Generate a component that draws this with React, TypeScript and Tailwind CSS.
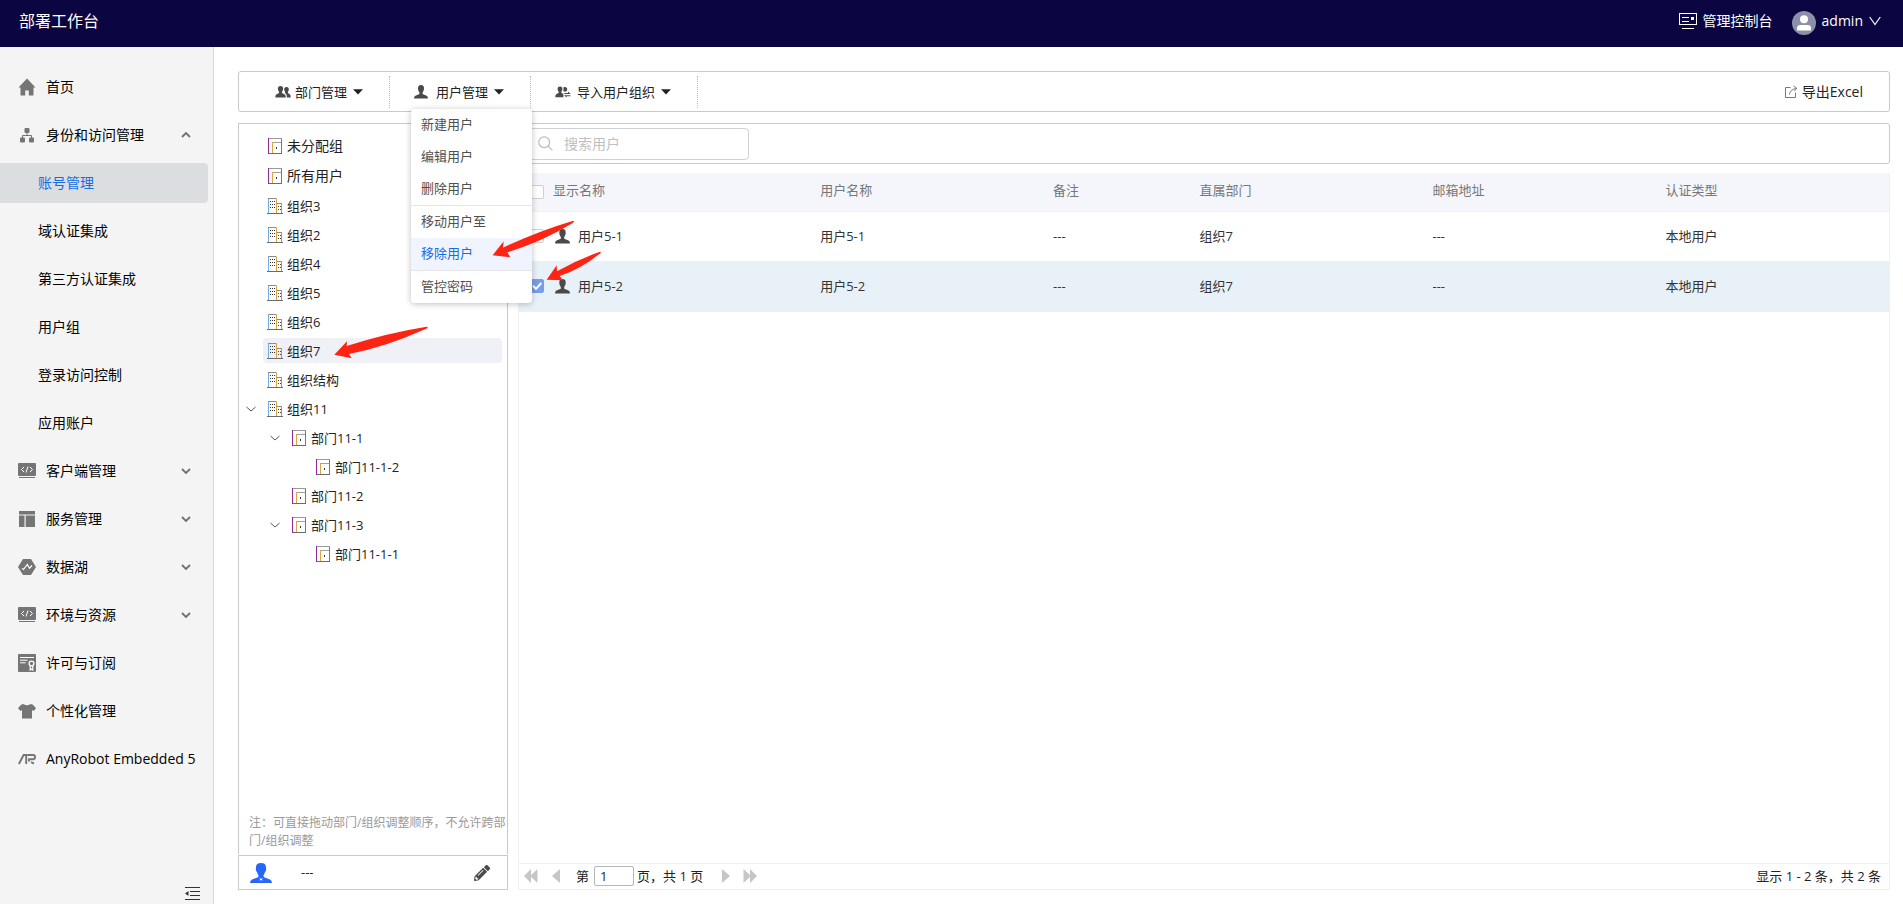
import React, { useState } from "react";
import { FaPencilAlt } from "react-icons/fa";

/* ---------- icons ---------- */

const HomeIcon = () => (
  <svg width="18" height="18" viewBox="0 0 18 18" fill="#757575">
    <path d="M9 0.5 L17.5 9.5 H15.5 V17.5 H10.8 V12.5 H7.2 V17.5 H2.5 V9.5 H0.5 Z" />
  </svg>
);

const TreeIcon = () => (
  <svg width="18" height="18" viewBox="0 0 18 18" fill="#757575">
    <rect x="6.5" y="2" width="5" height="5" rx="1" />
    <rect x="2" y="11.5" width="5" height="5" rx="1" />
    <rect x="11" y="11.5" width="5" height="5" rx="1" />
    <path d="M4.5 12 V9.5 H13.5 V12 M9 6.5 V9.5" fill="none" stroke="#757575" />
  </svg>
);

const CodeIcon = () => (
  <svg width="18" height="18" viewBox="0 0 18 18">
    <rect x="0" y="1" width="18" height="13" rx="1" fill="#757575" />
    <rect x="1" y="15" width="16" height="1" fill="#757575" />
    <path d="M6 5 L3.5 7.5 L6 10 M12 5 L14.5 7.5 L12 10 M10 4.5 L8 10.5" fill="none" stroke="#fff" strokeWidth="1" />
  </svg>
);

const LayoutIcon = () => (
  <svg width="18" height="18" viewBox="0 0 18 18" fill="#757575">
    <rect x="1" y="1" width="16" height="3.5" />
    <rect x="1" y="5.5" width="5.5" height="11.5" />
    <rect x="7.7" y="5.5" width="9.3" height="11.5" />
  </svg>
);

const LakeIcon = () => (
  <svg width="18" height="18" viewBox="0 0 18 18">
    <path d="M5 1 H13 L18 9 L13 17 H5 L0 9 Z" fill="#757575" />
    <path d="M4 10.5 L5.5 11.5 L9.3 6.5 L11.5 10.3 L14 7.5" fill="none" stroke="#fff" strokeWidth="1.2" />
  </svg>
);

const LicenseIcon = () => (
  <svg width="18" height="18" viewBox="0 0 18 18">
    <rect width="18" height="18" rx="1" fill="#757575" />
    <path d="M2 3.5 H16 M2 6.2 H9.5 M2 8.8 H7.5" stroke="#fff" strokeWidth="1" />
    <circle cx="13.5" cy="9.5" r="2.4" fill="none" stroke="#fff" strokeWidth="1.3" />
    <path d="M12.2 11.5 V16 L13.5 15 L14.8 16 V11.5" fill="none" stroke="#fff" strokeWidth="1.2" />
  </svg>
);

const ShirtIcon = () => (
  <svg width="18" height="18" viewBox="0 0 18 18" fill="#757575">
    <path d="M5.5 2 Q9 4.5 12.5 2 L15 2.8 L18 6.3 L15.6 9 L14 8 V16.5 H4 V8 L2.4 9 L0 6.3 L3 2.8 Z" />
  </svg>
);

const RobotIcon = () => (
  <svg width="18" height="18" viewBox="0 0 18 18" fill="none" stroke="#757575" strokeWidth="1.9">
    <path d="M0.9 14 L5.6 5 H8.2 V14" />
    <path d="M9.2 5 H15.2 Q17 5 17 7 Q17 9.2 15.2 9.2 H11 V11.6 M13 12.2 L16 13.6" />
  </svg>
);

const BustIcon = ({ className, color }: { className: string; color: string }) => (
  <svg className={className} viewBox="0 0 14 14" fill={color}>
    <path d="M7 0 C9.2 0 10.2 1.5 10 3.6 C10 5.4 9.3 6.6 8.6 7.4 V9 L12.6 10.8 Q14 11.4 14 13.5 H0 Q0 11.4 1.4 10.8 L5.4 9 V7.4 C4.7 6.6 4 5.4 4 3.6 C3.8 1.5 4.8 0 7 0 Z" />
  </svg>
);

const ProfileIcon = () => (
  <svg width="22" height="20" viewBox="0 0 22 20" fill="#2468f7">
    <path d="M11 0 C14.5 0 16.3 1.8 16 5 C16.6 7 15.6 8.6 14.9 9.3 C14.4 11 13.8 12 13.4 12.6 L14 14.3 L20 16.4 Q22 17.4 22 20 H0 Q0 17.4 2 16.4 L8 14.3 L8.6 12.6 C8.2 12 7.6 11 7.1 9.3 C6.4 8.6 5.4 7 6 5 C5.7 1.8 7.5 0 11 0 Z" />
    <path d="M9.2 14.4 L11 16 L12.8 14.4 L12 16.6 L12.6 18 L11 16.8 L9.4 18 L10 16.6 Z" fill="#fff" />
  </svg>
);

const GroupIcon = () => (
  <svg width="16" height="14" viewBox="0 0 16 14" fill="#4a4a4a">
    <path d="M5.5 1 C7.5 1 8.3 2.4 8.1 4 C8 5.3 7.4 6.2 7 6.7 V8 L9.8 9.4 Q10.8 10 10.8 12.5 H0.3 Q0.3 10 1.2 9.4 L4 8 V6.7 C3.6 6.2 3 5.3 2.9 4 C2.7 2.4 3.5 1 5.5 1 Z" />
    <path d="M11.5 2 C13.2 2 14 3.2 13.8 4.6 C13.7 5.7 13.2 6.4 12.9 6.9 V8 L15 9.4 Q15.7 10 15.7 12.5 H11.9 Q12 9.6 10.8 8.8 L9.8 8.1 L10.2 6.9 C9.6 6.2 9.2 5.4 9.2 4.6 C9.1 3.2 9.8 2 11.5 2 Z" />
  </svg>
);

const ImportIcon = () => (
  <svg width="16" height="14" viewBox="0 0 16 14" fill="#4a4a4a">
    <path d="M5 1.5 C6.8 1.5 7.6 2.7 7.4 4.2 C7.3 5.4 6.8 6.1 6.4 6.6 V7.8 L8.4 9 V12.2 H0.3 Q0.3 9.7 1.2 9.2 L3.7 7.8 V6.6 C3.3 6.1 2.7 5.4 2.6 4.2 C2.5 2.7 3.2 1.5 5 1.5 Z" />
    <path d="M9.8 2 C11.5 2 12.4 3 12.2 4.4 C12.1 5.4 11.7 6 11.3 6.4 H8.5 L8.3 5.6 C8.7 4.6 8.7 3.2 8.1 2.6 Z" />
    <path d="M9.2 8 H13 V6.6 L15.8 8.9 H9.2 Z M15.4 10.2 H9 L11.6 12.6 V11.2 H15.4 Z" />
  </svg>
);

const ExportIcon = () => (
  <svg width="14" height="14" viewBox="0 0 14 14" fill="none" stroke="#777">
    <path d="M6.5 2.5 H1.5 V12.5 H11.5 V7.5" />
    <path d="M5.5 9.5 Q6 4.5 12 3.5 M9.5 1 L12.7 3.2 L10.5 6" />
  </svg>
);

const BuildingIcon = () => (
  <svg width="16" height="16" viewBox="0 0 16 16" fill="none">
    <path d="M1.5 0 V15" stroke="#6eb0e6" />
    <path d="M1 0.5 H9.5 M9.5 5.5 H15" stroke="#8b8b8b" />
    <path d="M9.5 1 V15" stroke="#d9a13a" />
    <path d="M14.5 5.5 V15" stroke="#999" />
    <path d="M0 15.5 H16" stroke="#6b6b6b" />
    <path d="M3 3.5 H8 M3 6.5 H8 M3 9.5 H8" stroke="#333" strokeDasharray="1 1" />
    <path d="M11 8.5 H14 M11 11.5 H14" stroke="#444" strokeDasharray="1 1" />
  </svg>
);

const DoorIcon = () => (
  <svg width="16" height="16" viewBox="0 0 16 16" fill="none">
    <path d="M1 0.5 H15" stroke="#9a9a9a" />
    <path d="M14.5 1 V15" stroke="#777" />
    <path d="M1 15.5 H15" stroke="#6a6a6a" />
    <path d="M1.5 0 V16" stroke="#932a93" />
    <path d="M5.5 4 V15" stroke="#dba648" />
    <path d="M6 4.5 H14" stroke="#a0a0a0" />
    <rect x="9" y="9" width="1" height="2" fill="#333" />
  </svg>
);

const Chevron = ({ up = false }: { up?: boolean }) => (
  <svg width="10" height="8" viewBox="0 0 10 8" fill="none" stroke="#707070" strokeWidth="1.8">
    <path d={up ? "M1 6 L5 2 L9 6" : "M1 2 L5 6 L9 2"} />
  </svg>
);

const Caret = () => (
  <svg width="10" height="6" viewBox="0 0 10 6" fill="#222">
    <path d="M0 0.3 H10 L5 5.6 Z" />
  </svg>
);

/* ---------- data ---------- */

type NavItem = { label: string; icon?: React.ReactNode; arrow?: "up" | "down"; active?: boolean };

const NAV: NavItem[] = [
  { label: "首页", icon: <HomeIcon /> },
  { label: "身份和访问管理", icon: <TreeIcon />, arrow: "up" },
  { label: "账号管理", active: true },
  { label: "域认证集成" },
  { label: "第三方认证集成" },
  { label: "用户组" },
  { label: "登录访问控制" },
  { label: "应用账户" },
  { label: "客户端管理", icon: <CodeIcon />, arrow: "down" },
  { label: "服务管理", icon: <LayoutIcon />, arrow: "down" },
  { label: "数据湖", icon: <LakeIcon />, arrow: "down" },
  { label: "环境与资源", icon: <CodeIcon />, arrow: "down" },
  { label: "许可与订阅", icon: <LicenseIcon /> },
  { label: "个性化管理", icon: <ShirtIcon /> },
  { label: "AnyRobot Embedded 5", icon: <RobotIcon /> },
];

type Node = { label: string; kind: "org" | "dept"; level: 0 | 1 | 2; open?: boolean; selected?: boolean };

const TREE: Node[] = [
  { label: "组织3", kind: "org", level: 0 },
  { label: "组织2", kind: "org", level: 0 },
  { label: "组织4", kind: "org", level: 0 },
  { label: "组织5", kind: "org", level: 0 },
  { label: "组织6", kind: "org", level: 0 },
  { label: "组织7", kind: "org", level: 0, selected: true },
  { label: "组织结构", kind: "org", level: 0 },
  { label: "组织11", kind: "org", level: 0, open: true },
  { label: "部门11-1", kind: "dept", level: 1, open: true },
  { label: "部门11-1-2", kind: "dept", level: 2 },
  { label: "部门11-2", kind: "dept", level: 1 },
  { label: "部门11-3", kind: "dept", level: 1, open: true },
  { label: "部门11-1-1", kind: "dept", level: 2 },
];

const INDENT = ["pl-0", "pl-6", "pl-12"];

const MENU = [
  ["新建用户", "编辑用户", "删除用户"],
  ["移动用户至", "移除用户"],
  ["管控密码"],
];

const USERS = [
  { name: "用户5-1", login: "用户5-1", note: "---", dept: "组织7", mail: "---", auth: "本地用户" },
  { name: "用户5-2", login: "用户5-2", note: "---", dept: "组织7", mail: "---", auth: "本地用户" },
];

/* ---------- parts ---------- */

function Header() {
  return (
    <header className="flex h-[47px] shrink-0 items-center justify-between bg-[#0b0541] pb-[5px] pl-[19px] pr-[22px] text-white">
      <h1 className="text-base leading-6">部署工作台</h1>
      <div className="flex items-center text-sm leading-5">
        <a href="#console" className="flex items-center gap-[6px]">
          <svg width="18" height="18" viewBox="0 0 18 18" fill="none" stroke="#fff">
            <rect x="0.5" y="1.5" width="17" height="11" />
            <path d="M3 5.5 H10 M3 9.5 H10 M3 16.5 H15" />
            <rect x="12" y="5" width="3" height="3" fill="#fff" stroke="none" />
          </svg>
          管理控制台
        </a>
        <button type="button" className="ml-[19px] flex items-center gap-[6px]">
          <svg className="mt-[3px]" width="24" height="24" viewBox="0 0 24 24">
            <circle cx="12" cy="12" r="12" fill="#8b8fa8" />
            <circle cx="12" cy="8.2" r="4" fill="#fff" />
            <path d="M5 19.5 V17 Q5 14 8.5 14 H15.5 Q19 14 19 17 V19.5 Z" fill="#fff" />
          </svg>
          admin
          <svg width="12" height="10" viewBox="0 0 12 10" fill="none" stroke="#fff" strokeWidth="1.2">
            <path d="M0.7 1 L6 8.5 L11.3 1" />
          </svg>
        </button>
      </div>
    </header>
  );
}

function Sidebar() {
  return (
    <aside className="flex w-[214px] shrink-0 flex-col border-r border-[#d9d9d9] bg-[#f4f4f4] pt-5">
      <nav className="flex flex-col gap-2 pr-[5px] text-sm leading-5">
        {NAV.map((item) => (
          <a
            key={item.label}
            href="#nav"
            className={
              "flex h-10 items-center rounded-r-sm " +
              (item.active ? "bg-[#dcdde1] text-[#126ee3] " : "text-black ") +
              (item.icon ? "pl-[18px] pr-[17px]" : "pl-[38px]")
            }
          >
            {item.icon && <span className="mr-[10px] shrink-0">{item.icon}</span>}
            <span className="flex-1 whitespace-nowrap">{item.label}</span>
            {item.arrow && <Chevron up={item.arrow === "up"} />}
          </a>
        ))}
      </nav>
      <button type="button" aria-label="收起" className="mt-auto mr-[13px] mb-[3px] self-end">
        <svg width="15" height="14" viewBox="0 0 15 14" fill="#333">
          <path d="M0 0 H15 V1 H0 Z M5 4 H15 V5 H5 Z M5 8 H15 V9 H5 Z M0 12 H15 V13 H0 Z" />
          <path d="M0 6.5 L3.5 4 V9 Z" />
        </svg>
      </button>
    </aside>
  );
}

function UserMenu() {
  return (
    <div className="absolute -right-[2px] top-[33px] z-20 w-[121px] rounded-sm bg-white shadow-[0_1px_6px_rgba(0,0,0,0.25)]">
      {MENU.map((group, i) => (
        <div key={group[0]} className={i > 0 ? "border-t border-[#e6e6e6]" : ""}>
          {group.map((label) => (
            <button
              type="button"
              key={label}
              className={
                "flex h-8 w-full items-center pb-px pl-[10px] " +
                (label === "移除用户" ? "bg-[#f0f4ff] text-[#126ee3]" : "text-[#505050]")
              }
            >
              {label}
            </button>
          ))}
        </div>
      ))}
    </div>
  );
}

function Toolbar() {
  return (
    <div className="flex h-[41px] shrink-0 items-center rounded-[3px] border border-[#c9c9c9] text-[13px] leading-5 text-[#222]">
      <div className="flex h-8 w-[151px] items-center border-r border-dotted border-[#bbb] pl-9">
        <button type="button" className="flex items-center">
          <GroupIcon />
          <span className="ml-1 mr-[6px]">部门管理</span>
          <Caret />
        </button>
      </div>
      <div className="relative flex h-8 w-[141px] items-center border-r border-dotted border-[#bbb] pl-6">
        <button type="button" className="flex items-center">
          <BustIcon className="h-[14px] w-[14px]" color="#4a4a4a" />
          <span className="ml-2 mr-[6px]">用户管理</span>
          <Caret />
        </button>
        <UserMenu />
      </div>
      <div className="flex h-8 w-[167px] items-center border-r border-dotted border-[#bbb] pl-6">
        <button type="button" className="flex items-center">
          <ImportIcon />
          <span className="mx-[6px]">导入用户组织</span>
          <Caret />
        </button>
      </div>
      <button type="button" className="ml-auto mr-[26px] flex items-center gap-1 text-sm leading-5">
        <ExportIcon />
        导出Excel
      </button>
    </div>
  );
}

function OrgPanel() {
  return (
    <section className="flex w-[270px] shrink-0 flex-col">
      <div className="flex flex-1 flex-col border border-b-0 border-[#c9c9c9] pt-[7px] text-[#222]">
        {["未分配组", "所有用户"].map((label) => (
          <button type="button" key={label} className="flex h-[30px] items-center gap-1 pl-7 text-sm leading-5">
            <DoorIcon />
            {label}
          </button>
        ))}
        <ul className="text-[13px] leading-5">
          {TREE.map((n) => (
            <li key={n.label} className={"flex h-[29px] items-center pr-[5px] " + INDENT[n.level]}>
              <span className="flex w-6 shrink-0 pl-[7px]">
                {n.open && (
                  <svg width="10" height="8" viewBox="0 0 10 8" fill="none" stroke="#555">
                    <path d="M0.5 2 L5 6 L9.5 2" />
                  </svg>
                )}
              </span>
              <button
                type="button"
                className={"flex h-[25px] flex-1 items-center gap-1 rounded-sm pl-1 " + (n.selected ? "bg-[#eff1f7]" : "")}
              >
                {n.kind === "org" ? <BuildingIcon /> : <DoorIcon />}
                {n.label}
              </button>
            </li>
          ))}
        </ul>
        <p className="mt-auto mb-1 pl-[10px] text-xs leading-[18px] text-[#999]">
          注：可直接拖动部门/组织调整顺序，不允许跨部门/组织调整
        </p>
      </div>
      <div className="mt-px flex h-[35px] items-center border border-[#c9c9c9] pl-[11px] pr-[17px] pt-px text-[13px]">
        <ProfileIcon />
        <span className="ml-[29px] flex-1">---</span>
        <button type="button" aria-label="编辑">
          <FaPencilAlt size={16} color="#4a4a4a" />
        </button>
      </div>
    </section>
  );
}

function Check({ label, checked, onChange }: { label: string; checked: boolean; onChange: () => void }) {
  return (
    <span className="relative ml-[11px] block h-[14px] w-[14px]">
      <input
        type="checkbox"
        aria-label={label}
        checked={checked}
        onChange={onChange}
        className="block h-[14px] w-[14px] appearance-none rounded-xs border border-[#cfcfd6] bg-white checked:border-[#779eea] checked:bg-[#779eea]"
      />
      {checked && (
        <svg className="pointer-events-none absolute inset-0" width="14" height="14" viewBox="0 0 14 14" fill="none" stroke="#fff" strokeWidth="2">
          <path d="M3 6.8 L6 9.8 L11.3 4" />
        </svg>
      )}
    </span>
  );
}

function UserTable() {
  const [picked, setPicked] = useState([false, true]);
  const toggle = (i: number) => setPicked(picked.map((p, k) => (k === i ? !p : p)));
  const all = picked.every(Boolean);
  return (
    <table className="w-full table-fixed border-collapse text-left text-[13px] leading-5">
      <colgroup>
        <col className="w-6" />
        <col className="w-[19.5%]" />
        <col className="w-[17%]" />
        <col className="w-[10.7%]" />
        <col className="w-[17%]" />
        <col className="w-[17%]" />
        <col />
      </colgroup>
      <thead>
        <tr className="h-[38px] border-b border-[#f0f0f0] bg-[#f5f6fc] text-[#777]">
          <th className="p-0">
            <Check label="全选" checked={all} onChange={() => setPicked(picked.map(() => !all))} />
          </th>
          {["显示名称", "用户名称", "备注", "直属部门", "邮箱地址", "认证类型"].map((h) => (
            <th key={h} className="px-[10px] pt-0 pb-[3px] font-normal">{h}</th>
          ))}
        </tr>
      </thead>
      <tbody className="text-[#333]">
        {USERS.map((u, i) => (
          <tr key={u.name} className={"h-[50px] border-b border-[#f0f0f0] " + (picked[i] ? "bg-[#e8f1f7]" : "")}>
            <td className="p-0">
              <Check label={u.name} checked={picked[i]} onChange={() => toggle(i)} />
            </td>
            <td className="px-[10px]">
              <span className="flex items-center gap-2 pl-[2px]">
                <BustIcon className="h-[15px] w-[15px]" color="#4a4a4a" />
                {u.name}
              </span>
            </td>
            <td className="px-[10px]">{u.login}</td>
            <td className="px-[10px]">{u.note}</td>
            <td className="px-[10px]">{u.dept}</td>
            <td className="px-[10px]">{u.mail}</td>
            <td className="px-[10px]">{u.auth}</td>
          </tr>
        ))}
      </tbody>
    </table>
  );
}

function Pager() {
  return (
    <footer className="flex h-[26px] items-center border-t border-[#f0f0f0] pb-px pl-[5px] pr-2 text-[13px] leading-5 text-[#222]">
      <button type="button" aria-label="首页">
        <svg width="14" height="14" viewBox="0 0 14 14" fill="#c6c6c6"><path d="M0 7 L7 0 V14 Z M6 7 L13.5 0 V14 Z" /></svg>
      </button>
      <button type="button" aria-label="上一页" className="ml-[14px]">
        <svg width="8" height="14" viewBox="0 0 8 14" fill="#c6c6c6"><path d="M0 7 L8 0 V14 Z" /></svg>
      </button>
      <label className="ml-4 flex items-center gap-[5px]">
        第
        <input defaultValue="1" className="h-5 w-10 rounded-xs border border-[#b5b5b5] pl-[5px] text-[13px] outline-none" />
      </label>
      <span className="ml-[3px]">页，共 1 页</span>
      <button type="button" aria-label="下一页" className="ml-[19px]">
        <svg width="8" height="14" viewBox="0 0 8 14" fill="#c6c6c6"><path d="M8 7 L0 0 V14 Z" /></svg>
      </button>
      <button type="button" aria-label="末页" className="ml-[13px]">
        <svg width="14" height="14" viewBox="0 0 14 14" fill="#c6c6c6"><path d="M14 7 L7 0 V14 Z M8 7 L0.5 0 V14 Z" /></svg>
      </button>
      <span className="ml-auto">显示 1 - 2 条，共 2 条</span>
    </footer>
  );
}

function UserPanel() {
  return (
    <section className="flex min-w-0 flex-1 flex-col">
      <div className="mb-[9px] flex h-[41px] shrink-0 items-center rounded-[3px] border border-[#c9c9c9] pl-1">
        <label className="flex h-8 w-[226px] items-center gap-[11px] rounded border border-[#d0d0d8] pl-[14px]">
          <svg className="shrink-0" width="15" height="15" viewBox="0 0 15 15" fill="none" stroke="#bbb" strokeWidth="1.2">
            <circle cx="6.2" cy="6.2" r="5.4" />
            <path d="M10.2 10.2 L14.4 14.4" />
          </svg>
          <input placeholder="搜索用户" aria-label="搜索用户" className="w-full min-w-0 bg-transparent text-sm outline-none placeholder:text-[#c0c0c0]" />
        </label>
      </div>
      <div className="flex flex-1 flex-col border border-t-0 border-[#f0f0f0]">
        <div className="flex-1">
          <UserTable />
        </div>
        <Pager />
      </div>
    </section>
  );
}

function Pointers() {
  return (
    <svg className="pointer-events-none absolute left-[325px] top-[210px] z-30" width="290" height="155" viewBox="0 0 870 465" fill="#fd2413">
      <path d="M503 136 L536 94 L534 113 Q640 63 745 32 Q750 34 742 40 Q650 96 547 127 L556 142 Z" />
      <path d="M665 209 L695 166 L696 184 Q760 148 825 125 Q832 127 820 134 Q770 175 704 198 L715 211 Z" />
      <path d="M28 434 L66 394 L65 408 Q190 368 305 350 Q314 352 300 358 Q180 412 72 432 L80 445 Z" />
    </svg>
  );
}

export default function App() {
  return (
    <div className="relative flex min-h-screen flex-col bg-white font-['Open_Sans','Noto_Sans_CJK_SC',sans-serif] text-[#222]">
      <Header />
      <div className="flex flex-1">
        <Sidebar />
        <main className="flex min-w-0 flex-1 flex-col gap-[11px] pb-[14px] pl-6 pr-[13px] pt-6">
          <Toolbar />
          <div className="flex flex-1 gap-[10px]">
            <OrgPanel />
            <UserPanel />
          </div>
        </main>
      </div>
      <Pointers />
    </div>
  );
}
